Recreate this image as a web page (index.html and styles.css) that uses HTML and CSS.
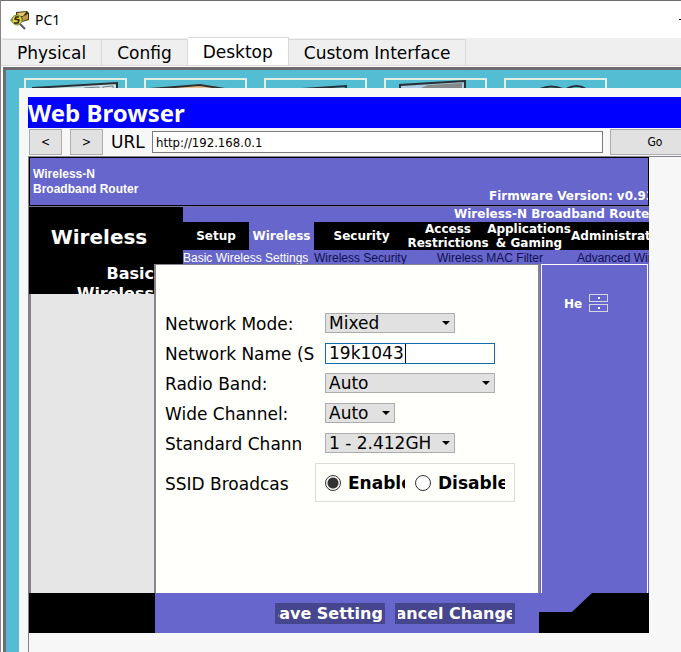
FILE: index.html
```html
<!DOCTYPE html>
<html lang="en">
<head>
<meta charset="utf-8">
<title>PC1</title>
<link rel="stylesheet" href="styles.css">
</head>
<body>
<div class="window">
  <header class="titlebar">
    <svg class="app-icon" viewBox="0 0 20 20" aria-hidden="true">
      <path d="M6 2 17 1 19 3V10L12 12 6 10Z" fill="#3d3a18"/>
      <path d="M7 3 16 2 13 6 8 6Z" fill="#e9c66c"/>
      <path d="M12 7 18 4V9L13 11Z" fill="#c29a48"/>
      <path d="M0 10 5 5 10 6 13 11 10 14 4 14Z" fill="#5d9140"/>
      <circle cx="7" cy="10" r="5" fill="#e8cf35" stroke="#6f8f4a"/>
      <path d="M9 7H6L5 9 9 10 8 13H4" fill="none" stroke="#26250c" stroke-width="1.5"/>
      <path d="m10 14 5 5" stroke="#555861" stroke-width="2"/>
    </svg>
    <span class="window-name">PC1</span>
    <button class="minimize" aria-label="Minimize"></button>
  </header>
  <nav class="tabs">
    <button class="tab">Physical</button>
    <button class="tab">Config</button>
    <button class="tab tab-active">Desktop</button>
    <button class="tab">Custom Interface</button>
  </nav>
  <main class="desktop">
    <div class="tiles">
      <div class="tile"><svg viewBox="0 0 99 10"><path d="M6 8 91 3V10H6Z" fill="#c8dce3"/><path d="M6 8 91 3V10" fill="none" stroke="#263136" stroke-width="2"/><path d="M58 10V8L73 7V10M77 10V7L87 6V10" fill="#dde4e8" stroke="#777f8c"/></svg></div>
      <div class="tile"><svg viewBox="0 0 99 10"><path d="M4 10 54 5 78 10Z" fill="#e8bd94"/><path d="M4 9 54 5 79 9" fill="none" stroke="#30302c" stroke-width="2"/></svg></div>
      <div class="tile"><svg viewBox="0 0 99 10"><path d="M36 9 80 6V10" fill="none" stroke="#263136" stroke-width="2"/></svg></div>
      <div class="tile"><svg viewBox="0 0 99 10"><path d="M14 5 79 1V10H14Z" fill="#a9cbe2"/><path d="M42 5 76 3V10H30Z" fill="#84898a"/><path d="M14 10V5L79 1V10" fill="none" stroke="#263136" stroke-width="2"/></svg></div>
      <div class="tile"><svg viewBox="0 0 99 10"><path d="M32 10Q45 3 59 10M60 9Q71 3 80 9" fill="none" stroke="#263136" stroke-width="2"/></svg></div>
    </div>
    <section class="browser">
      <h1 class="browser-title">Web Browser</h1>
      <form class="toolbar">
        <button type="button" class="tool history">&lt;</button>
        <button type="button" class="tool history">&gt;</button>
        <label class="url-label" for="url">URL</label>
        <input class="url" id="url" type="text" value="http://192.168.0.1">
        <button type="button" class="tool go">Go</button>
      </form>
      <div class="viewport">
        <div class="router">
          <div class="banner">
            <p class="model">Wireless-N<br>Broadband Router</p>
            <p class="firmware">Firmware Version: v0.93.3</p>
          </div>
          <div class="masthead">
            <h2 class="section-name">Wireless</h2>
            <div class="menus">
              <p class="product">Wireless-N Broadband Router</p>
              <nav class="menu">
                <a href="#setup">Setup</a>
                <a href="#wireless" class="current">Wireless</a>
                <a href="#security">Security</a>
                <a href="#access">Access<br>Restrictions</a>
                <a href="#applications">Applications<br>&amp; Gaming</a>
                <a href="#administration" class="from-start">Administration</a>
              </nav>
              <nav class="submenu">
                <a href="#basic" class="current">Basic Wireless Settings</a>
                <a href="#wsec">Wireless Security</a>
                <a href="#mac">Wireless MAC Filter</a>
                <a href="#advanced">Advanced Wireless Settings</a>
              </nav>
            </div>
          </div>
          <form class="settings">
            <div class="columns">
              <aside class="side"><h3 class="page-name">Basic Wireless Settings</h3></aside>
              <div class="fields">
                <label for="mode">Network Mode:</label>
                <span class="select w130"><select id="mode"><option>Mixed</option></select></span>
                <label for="ssid">Network Name (SSID):</label>
                <span class="ssid-box"><input class="ssid" id="ssid" type="text" value="19k1043"></span>
                <label for="band">Radio Band:</label>
                <span class="select w170"><select id="band"><option>Auto</option></select></span>
                <label for="wide">Wide Channel:</label>
                <span class="select w70"><select id="wide"><option>Auto</option></select></span>
                <label for="standard" class="clip-channel">Standard Channel:</label>
                <span class="select w130"><select id="standard"><option>1 - 2.412GHz</option></select></span>
                <span class="clip-broadcast" id="broadcast">SSID Broadcast:</span>
                <div class="choices" role="radiogroup" aria-labelledby="broadcast">
                  <label class="choice"><input type="radio" name="broadcast" checked><span>Enabled</span></label>
                  <label class="choice"><input type="radio" name="broadcast"><span>Disabled</span></label>
                </div>
              </div>
              <aside class="help">
                <a href="#help">He</a>
                <span class="stepper"><i></i><i></i></span>
              </aside>
            </div>
            <footer class="actions">
              <div class="black"></div>
              <div class="buttons">
                <button type="button" class="save"><span>Save Settings</span></button>
                <button type="button" class="cancel"><span>Cancel Changes</span></button>
              </div>
              <div class="corner"></div>
            </footer>
          </form>
        </div>
      </div>
    </section>
  </main>
</div>
</body>
</html>
```
FILE: styles.css
```css
* { box-sizing: border-box; }
body {
  margin: 0;
  overflow: hidden;
  font-family: Verdana, "DejaVu Sans", sans-serif;
  color: #000;
}
h1, h2, h3, p { margin: 0; }
a { color: inherit; text-decoration: none; }
button, input, select { font: inherit; color: inherit; margin: 0; border-radius: 0; }
button { padding: 0; border: 0; }

.window {
  display: flex;
  flex-direction: column;
  min-height: 100vh;
  border-top: 1px solid #6e6c6f;
  border-left: 1px solid #8b8288;
  background: #fff;
}
.titlebar { display: flex; align-items: center; height: 37px; padding-left: 9px; }
.app-icon { width: 20px; height: 20px; }
.window-name { flex: 1; margin-left: 5px; font: 14px/20px "Segoe UI", "Noto Sans", sans-serif; }
.minimize { width: 2px; height: 1px; background: #000; }

.tabs { display: flex; align-items: flex-end; height: 28px; padding-left: 1px; background: #efefef; border-bottom: 1px solid #d9d9d9; }
.tab { height: 26px; padding: 0 15px; font-size: 17px; line-height: 26px; background: #efefef; border: 1px solid #d9d9d9; border-width: 1px 1px 0 0; }
.tab-active { height: 28px; background: #fff; }

.desktop {
  flex: 1;
  margin: 1px 0 0 2px;
  border: 3px solid #6d6d6d;
  border-width: 3px 0 0 3px;
  background: #54bcd3;
  overflow: hidden;
}
.tiles { display: flex; gap: 17px; height: 18px; padding: 8px 0 0 18px; overflow: hidden; }
.tile { flex: 0 0 103px; height: 40px; border: 2px solid #e3eee3; }
.tile svg { display: block; width: 99px; height: 10px; }

.browser { min-height: 564px; margin-left: 13px; padding: 9px 0 0 9px; background: #f7f7f7; }
.browser-title { height: 31px; background: #00f; color: #fff; font: bold 24px/31px Tahoma, "Noto Sans", sans-serif; }
.toolbar { display: flex; align-items: center; height: 28px; margin-right: -19px; padding-left: 1px; }
.tool { flex: none; height: 26px; border: 1px solid #adadad; background: #e1e1e1; font: 12px "DejaVu Sans Condensed", "DejaVu Sans", sans-serif; }
.history { width: 33px; margin-right: 8px; }
.go { width: 90px; }
.url-label { width: 41px; font-size: 17px; }
.url { flex: 1; min-width: 0; height: 22px; margin-right: 7px; padding: 0 3px; border: 1px solid #7a7a7a; background: #fff; font: 13px "DejaVu Sans Condensed", "DejaVu Sans", sans-serif; }

.viewport { min-height: 496px; padding-right: 32px; border-top: 1px solid #85858e; border-left: 1px solid #85808a; }
.router { overflow: hidden; background: #66c; color: #fff; }
.banner {
  display: flex;
  justify-content: space-between;
  height: 49px;
  padding: 9px 0 0 3px;
  border: 1px solid #000;
  outline: 1px solid #777799;
  background: #66c;
  overflow: hidden;
}
.model { font: bold 12px/15px Arial, "Liberation Sans", sans-serif; }
.firmware { flex: 0 0 159px; min-width: 0; align-self: flex-end; font-size: 12px; font-weight: bold; line-height: 18px; white-space: nowrap; }
.masthead { display: grid; grid-template-columns: 154px 1fr; height: 58px; }
.section-name { background: #000; padding: 18px 14px 0 0; font-size: 20px; line-height: 26px; text-align: center; }
.menus { min-width: 0; overflow: hidden; }
.product { height: 16px; padding-left: 271px; font-size: 12px; font-weight: bold; line-height: 16px; white-space: nowrap; }
.menu { display: grid; grid-template-columns: 66px 65px 95px 78px 84px 1fr; height: 28px; background: #000; font-size: 12px; font-weight: bold; line-height: 14px; }
.menu a { display: flex; align-items: center; justify-content: center; min-width: 0; text-align: center; }
.menu .current { background: #66c; }
.menu .from-start { justify-content: flex-start; }
.submenu { display: grid; grid-template-columns: 131px 123px 140px 1fr; height: 14px; color: #101050; font: 12px/16px Arial, "Liberation Sans", sans-serif; white-space: nowrap; overflow: hidden; }
.submenu .current { color: #fff; }

.columns { display: grid; grid-template-columns: 125px 1fr 109px; height: 329px; }
.side { background: #e6e6e6; border-left: 2px solid #85808a; }
.page-name { height: 30px; margin-left: -2px; background: #000; font-size: 16px; line-height: 20px; text-align: right; overflow: hidden; }
.fields {
  display: grid;
  grid-template-columns: 160px 1fr;
  grid-auto-rows: 30px;
  align-items: center;
  align-content: start;
  padding: 44px 0 0 9px;
  border: 1px solid #85858e;
  border-width: 1px 2px 0 2px;
  background: #fffffb;
  color: #000;
  font-size: 17px;
  line-height: 24px;
  white-space: nowrap;
}
.fields > label, .clip-broadcast { width: 150px; overflow: hidden; }
.fields > .clip-channel { width: 136px; }
.fields > .clip-broadcast { width: 124px; align-self: start; margin-top: 13px; }
.select { position: relative; display: block; height: 20px; }
.select::after { content: ""; position: absolute; right: 5px; top: 8px; width: 8px; height: 4px; background: #000; clip-path: polygon(0 0, 100% 0, 50% 100%); pointer-events: none; }
.select select { display: block; appearance: none; width: 100%; height: 20px; padding: 0 24px 0 3px; border: 1px solid #adadad; background: #e1e1e1; line-height: 18px; text-overflow: clip; outline: 0; }
.select.w70 select { padding-right: 18px; }
.select, .ssid-box { margin-bottom: 2px; }
.w130 { width: 130px; }
.w170 { width: 170px; }
.w70 { width: 70px; }
.ssid-box { position: relative; display: block; width: 170px; height: 21px; }
.ssid-box::after { content: ""; position: absolute; left: 80px; top: 1px; width: 1px; height: 19px; background: #000; }
.ssid { display: block; width: 100%; height: 21px; padding: 0 3px; border: 1px solid #0f6cad; outline: 0; background: #fff; }
.choices { display: grid; grid-template-columns: 80px 90px; align-self: start; gap: 10px; width: 200px; height: 39px; margin: 4px 0 0 -10px; padding: 0 9px; border: 1px solid #dcdcdc; font-weight: bold; }
.choice { display: flex; align-items: center; min-width: 0; }
.choice input { appearance: none; flex: none; width: 16px; height: 16px; margin: 0 7px 0 0; border: 1px solid #333; border-radius: 50%; background: #fff; }
.choice input:checked { background: radial-gradient(circle, #333 5px, #fff 6px); }
.choice span { overflow: hidden; }
.help { display: flex; align-items: flex-start; gap: 7px; margin: 0 1px; padding: 29px 0 0 22px; border: 1px solid #fff; border-bottom: 0; font-size: 12px; font-weight: bold; line-height: 20px; }
.stepper { display: grid; gap: 2px; }
.stepper i { display: grid; place-items: center; width: 19px; height: 8px; border: 1px solid #d6d6df; }
.stepper i::after { content: ""; width: 2px; height: 2px; background: #fff; }

.actions { display: grid; grid-template-columns: 126px 1fr 110px; height: 40px; }
.black { background: #000; }
.buttons { display: flex; justify-content: flex-end; gap: 10px; padding: 10px 24px 0 0; }
.buttons button { display: flex; justify-content: center; height: 21px; border: solid #46468e; border-width: 0 3px; background: #46468e; color: #fff; font-size: 16px; font-weight: bold; line-height: 21px; white-space: nowrap; overflow: hidden; }
.buttons button span { flex: none; }
.save { width: 110px; }
.cancel { width: 120px; }
.corner { background: #000; }
.corner::before { content: ""; display: block; width: 53px; height: 19px; background: #66c; clip-path: polygon(0 0, 100% 0, 62% 100%, 0 100%); }
```
